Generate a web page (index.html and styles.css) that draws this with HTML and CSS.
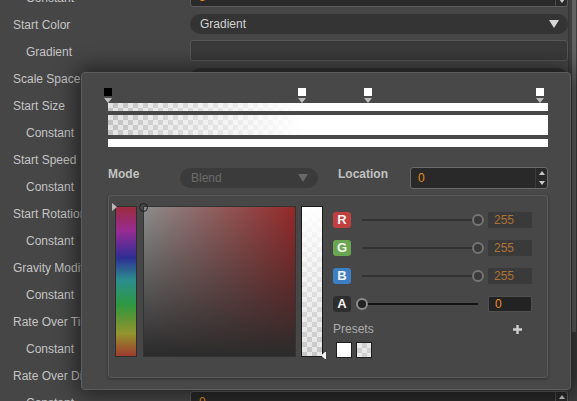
FILE: index.html
```html
<!DOCTYPE html>
<html>
<head>
<meta charset="utf-8">
<link rel="stylesheet" href="styles.css">
</head>
<body>
<div class="inspector">
  <div class="props">
    <div class="row"><span class="label sub">Constant</span><div class="ctrl num"><span class="val">5</span><span class="spin"><i class="up"></i><i class="down"></i></span></div></div>
    <div class="row"><span class="label">Start Color</span><div class="ctrl drop"><span>Gradient</span><svg class="arrow" width="10" height="8" viewBox="0 0 10 8"><path d="M0 0H10L5 8Z"/></svg></div></div>
    <div class="row"><span class="label sub">Gradient</span><div class="ctrl box"></div></div>
    <div class="row"><span class="label">Scale Space</span><div class="ctrl drop"></div></div>
    <div class="row"><span class="label">Start Size</span><div class="ctrl drop"></div></div>
    <div class="row"><span class="label sub">Constant</span><div class="ctrl num"></div></div>
    <div class="row"><span class="label">Start Speed</span><div class="ctrl drop"></div></div>
    <div class="row"><span class="label sub">Constant</span><div class="ctrl num"></div></div>
    <div class="row"><span class="label">Start Rotation</span><div class="ctrl drop"></div></div>
    <div class="row"><span class="label sub">Constant</span><div class="ctrl num"></div></div>
    <div class="row"><span class="label">Gravity Modifier</span><div class="ctrl drop"></div></div>
    <div class="row"><span class="label sub">Constant</span><div class="ctrl num"></div></div>
    <div class="row"><span class="label">Rate Over Time</span><div class="ctrl drop"></div></div>
    <div class="row"><span class="label sub">Constant</span><div class="ctrl num"></div></div>
    <div class="row"><span class="label">Rate Over Distance</span><div class="ctrl drop"></div></div>
    <div class="row"><span class="label sub">Constant</span><div class="ctrl num"><span class="val">0</span><span class="spin"><i class="up"></i><i class="down"></i></span></div></div>
  </div>
  <div class="scrollbar"><div class="thumb"></div></div>
</div>

<div class="popup">
  <div class="keys">
    <div class="key" style="left:0%"><span class="sq black"></span><svg class="tri" width="8" height="5" viewBox="0 0 8 5"><path d="M0 0H8L4 5Z"/></svg></div>
    <div class="key" style="left:44.1%"><span class="sq"></span><svg class="tri" width="8" height="5" viewBox="0 0 8 5"><path d="M0 0H8L4 5Z"/></svg></div>
    <div class="key" style="left:59.1%"><span class="sq"></span><svg class="tri" width="8" height="5" viewBox="0 0 8 5"><path d="M0 0H8L4 5Z"/></svg></div>
    <div class="key" style="left:98.2%"><span class="sq"></span><svg class="tri" width="8" height="5" viewBox="0 0 8 5"><path d="M0 0H8L4 5Z"/></svg></div>
  </div>
  <div class="bar bar-alpha"></div>
  <div class="bar bar-mix"></div>
  <div class="bar bar-color"></div>

  <div class="mode-row">
    <span class="field-label">Mode</span>
    <div class="blend"><span>Blend</span><svg width="10" height="8" viewBox="0 0 10 8"><path d="M0 0H10L5 8Z"/></svg></div>
    <span class="field-label loc">Location</span>
    <div class="loc-input"><span class="val">0</span><span class="spin"><i class="up"></i><i class="down"></i></span></div>
  </div>

  <div class="picker">
    <div class="hue"><svg class="hue-mark" width="5" height="8" viewBox="0 0 5 8"><path d="M0 0L5 4L0 8Z"/></svg></div>
    <div class="sv"><span class="sv-mark"></span></div>
    <div class="alpha"><svg class="alpha-mark" width="5" height="7" viewBox="0 0 5 7"><path d="M5 0V7H4L0 3.5L4 0Z"/></svg></div>
    <div class="channels">
      <div class="ch"><span class="badge r">R</span><div class="slider"><span class="knob right"></span></div><span class="value">255</span></div>
      <div class="ch"><span class="badge g">G</span><div class="slider"><span class="knob right"></span></div><span class="value">255</span></div>
      <div class="ch"><span class="badge b">B</span><div class="slider"><span class="knob right"></span></div><span class="value">255</span></div>
      <div class="ch"><span class="badge a">A</span><div class="slider dark"><span class="knob left"></span></div><span class="value active">0</span></div>
      <div class="presets-head"><span>Presets</span><svg width="9" height="9" viewBox="0 0 9 9"><path d="M3.3 0H5.7V3.3H9V5.7H5.7V9H3.3V5.7H0V3.3H3.3Z"/></svg></div>
      <div class="swatches"><span class="swatch white"></span><span class="swatch checker"></span></div>
    </div>
  </div>
</div>
</body>
</html>
```
FILE: styles.css
```css
html, body {
  margin: 0;
  padding: 0;
}
body {
  width: 577px;
  height: 401px;
  overflow: hidden;
  background: #464646;
  font-family: "Liberation Sans", Arial, sans-serif;
  font-size: 12px;
  color: #c4c4c4;
  position: relative;
}
.inspector {
  display: flex;
  height: 401px;
}
.props {
  width: 568px;
  margin-top: -17px;
}
.row {
  height: 27px;
  display: flex;
  align-items: center;
}
.label {
  width: 177px;
  padding-left: 13px;
  padding-top: 2px;
  white-space: nowrap;
  overflow: hidden;
}
.label.sub {
  width: 164px;
  padding-left: 26px;
}
.ctrl {
  flex: 1;
  height: 21px;
  box-sizing: border-box;
  display: flex;
  align-items: center;
}
.drop {
  height: 20px;
  background: #343434;
  border-radius: 10px;
  padding: 0 10px 0 10px;
  justify-content: space-between;
  color: #d2d2d2;
}
.drop .arrow {
  fill: #d8d8d8;
  margin-right: -1px;
}
.box {
  background: #3a3a3a;
  border: 1px solid #575757;
  border-radius: 3px;
}
.num {
  background: #2a2a2a;
  border: 1px solid #5c5c5c;
  border-radius: 3px;
  padding-left: 8px;
  justify-content: space-between;
}
.val {
  color: #e8891e;
}
.spin {
  width: 11px;
  height: 100%;
  border-left: 1px solid #4a4a4a;
  display: flex;
  flex-direction: column;
  justify-content: space-around;
  align-items: center;
}
.spin i {
  display: block;
  width: 0;
  height: 0;
  border-left: 3px solid transparent;
  border-right: 3px solid transparent;
}
.spin .up {
  border-bottom: 4px solid #c8c8c8;
}
.spin .down {
  border-top: 4px solid #c8c8c8;
}
.scrollbar {
  width: 9px;
  background: #3e3e3e;
  border-left: 1px solid #353535;
  box-sizing: border-box;
  padding-left: 3px;
}
.thumb {
  width: 4px;
  height: 332px;
  background: #616161;
}

/* popup */
.popup {
  position: absolute;
  left: 81px;
  top: 72px;
  width: 490px;
  height: 318px;
  box-sizing: border-box;
  border: 1px solid #5c5c5c;
  border-radius: 4px;
  background: #484848;
  padding: 0 22px 0 26px;
  box-shadow: 0 0 22px 4px rgba(0, 0, 0, 0.55);
}
.keys {
  position: relative;
  height: 30px;
}
.key {
  position: absolute;
  top: 15px;
  width: 8px;
  transform: translateX(-50%);
  display: flex;
  flex-direction: column;
}
.sq {
  width: 8px;
  height: 8px;
  background: #fff;
}
.sq.black {
  background: #000;
}
.tri {
  margin-top: 2px;
  fill: #bcbcbc;
}
.bar {
  height: 8px;
  margin-bottom: 4px;
}
.bar-alpha, .bar-mix {
  background:
    linear-gradient(to right, rgba(255, 255, 255, 0) 0%, #fff 44.1%, #fff 100%),
    conic-gradient(#c2c2c2 0 25%, #e4e4e4 0 50%, #c2c2c2 0 75%, #e4e4e4 0) 0 0 / 10px 10px;
}
.bar-mix {
  height: 20px;
}
.bar-color {
  background: #fff;
  margin-bottom: 0;
}
.mode-row {
  margin-top: 20px;
  height: 21px;
  display: flex;
  align-items: center;
}
.field-label {
  width: 72px;
  font-weight: bold;
  color: #c0c0c0;
  padding-bottom: 7px;
}
.field-label.loc {
  margin-left: 20px;
}
.blend {
  width: 138px;
  height: 20px;
  box-sizing: border-box;
  background: #3b3b3b;
  border-radius: 10px;
  padding: 0 10px 0 11px;
  display: flex;
  align-items: center;
  justify-content: space-between;
  color: #6b6b6b;
}
.blend svg {
  fill: #686868;
}
.loc-input {
  width: 138px;
  height: 22px;
  box-sizing: border-box;
  background: #292929;
  border: 1px solid #6a6a6a;
  border-radius: 3px;
  padding-left: 7px;
  display: flex;
  align-items: center;
  justify-content: space-between;
}
.loc-input .spin {
  border-left: 1px solid #3a3a3a;
}
.picker {
  margin-top: 7px;
  height: 183px;
  box-sizing: border-box;
  border: 1px solid #5a5a5a;
  border-radius: 3px;
  background: #474747;
  box-shadow: 0 1px 3px rgba(0, 0, 0, 0.35);
  display: flex;
  align-items: flex-start;
  padding: 10px 0 0 6px;
}
.hue {
  position: relative;
  width: 22px;
  height: 151px;
  box-sizing: border-box;
  border: 1px solid #2e2e2e;
  background: linear-gradient(to bottom, #9c2c3c 0%, #982b94 16%, #2e2e94 34%, #2a8e8e 49%, #2f983e 66%, #94942c 85%, #9e3a2e 100%);
}
.hue-mark {
  position: absolute;
  left: -4px;
  top: -4px;
  fill: #b8b8b8;
}
.sv {
  position: relative;
  margin-left: 6px;
  width: 153px;
  height: 151px;
  box-sizing: border-box;
  border: 1px solid #333;
  background:
    linear-gradient(to top, #2b2b2b 0%, rgba(43, 43, 43, 0) 100%),
    linear-gradient(to right, #8c8c8c 0%, #952828 100%);
}
.sv-mark {
  position: absolute;
  left: -5px;
  top: -4px;
  width: 7px;
  height: 7px;
  border: 1.5px solid #1e1e1e;
  border-radius: 50%;
}
.alpha {
  position: relative;
  margin-left: 5px;
  width: 22px;
  height: 151px;
  box-sizing: border-box;
  border: 1px solid #1a1a1a;
  background:
    linear-gradient(to bottom, #fff 0%, rgba(255, 255, 255, 0) 100%),
    conic-gradient(#c6c6c6 0 25%, #e6e6e6 0 50%, #c6c6c6 0 75%, #e6e6e6 0) 0 0 / 10px 10px;
}
.alpha-mark {
  position: absolute;
  right: -4px;
  bottom: -3px;
  fill: #f4f4f4;
}
.channels {
  margin-left: 10px;
  margin-top: 6px;
  width: 199px;
  display: flex;
  flex-direction: column;
}
.ch {
  height: 16px;
  margin-bottom: 12px;
  display: flex;
  align-items: center;
}
.badge {
  width: 18px;
  height: 16px;
  border-radius: 3px;
  color: #f2f2f2;
  font-weight: bold;
  font-size: 13px;
  line-height: 16px;
  text-align: center;
}
.badge.r { background: #c0403f; }
.badge.g { background: #6aa651; }
.badge.b { background: #3c80c3; }
.badge.a { background: #2e2e2e; }
.slider {
  position: relative;
  margin-left: 5px;
  width: 128px;
  height: 16px;
}
.slider::before {
  content: "";
  position: absolute;
  left: 6px;
  right: 6px;
  top: 7px;
  height: 2px;
  background: #323232;
}
.slider.dark::before {
  background: #121212;
}
.knob {
  position: absolute;
  top: 2px;
  width: 12px;
  height: 12px;
  box-sizing: border-box;
  border: 2px solid #747474;
  border-radius: 50%;
  background: #3a3a3a;
}
.knob.right { right: 0; }
.knob.left {
  left: 0;
  border-color: #8a8a8a;
  background: #222;
}
.value {
  margin-left: 4px;
  width: 44px;
  height: 16px;
  box-sizing: border-box;
  background: #3a3a3a;
  color: #ad7334;
  padding-left: 6px;
  line-height: 16px;
}
.value.active {
  background: #232323;
  border: 1px solid #505050;
  color: #f0902a;
  line-height: 14px;
}
.presets-head {
  margin-top: -3px;
  height: 16px;
  display: flex;
  align-items: center;
  justify-content: space-between;
  padding-right: 10px;
  color: #ababab;
}
.presets-head svg {
  fill: #cfcfcf;
}
.swatches {
  margin-top: 5px;
  margin-left: 3px;
  display: flex;
  gap: 4px;
}
.swatch {
  width: 16px;
  height: 16px;
  box-sizing: border-box;
  border: 1px solid #1e1e1e;
}
.swatch.white {
  background: #fff;
}
.swatch.checker {
  background: conic-gradient(#d0d0d0 0 25%, #e8e8e8 0 50%, #d0d0d0 0 75%, #e8e8e8 0) 0 0 / 10px 10px;
}
```
